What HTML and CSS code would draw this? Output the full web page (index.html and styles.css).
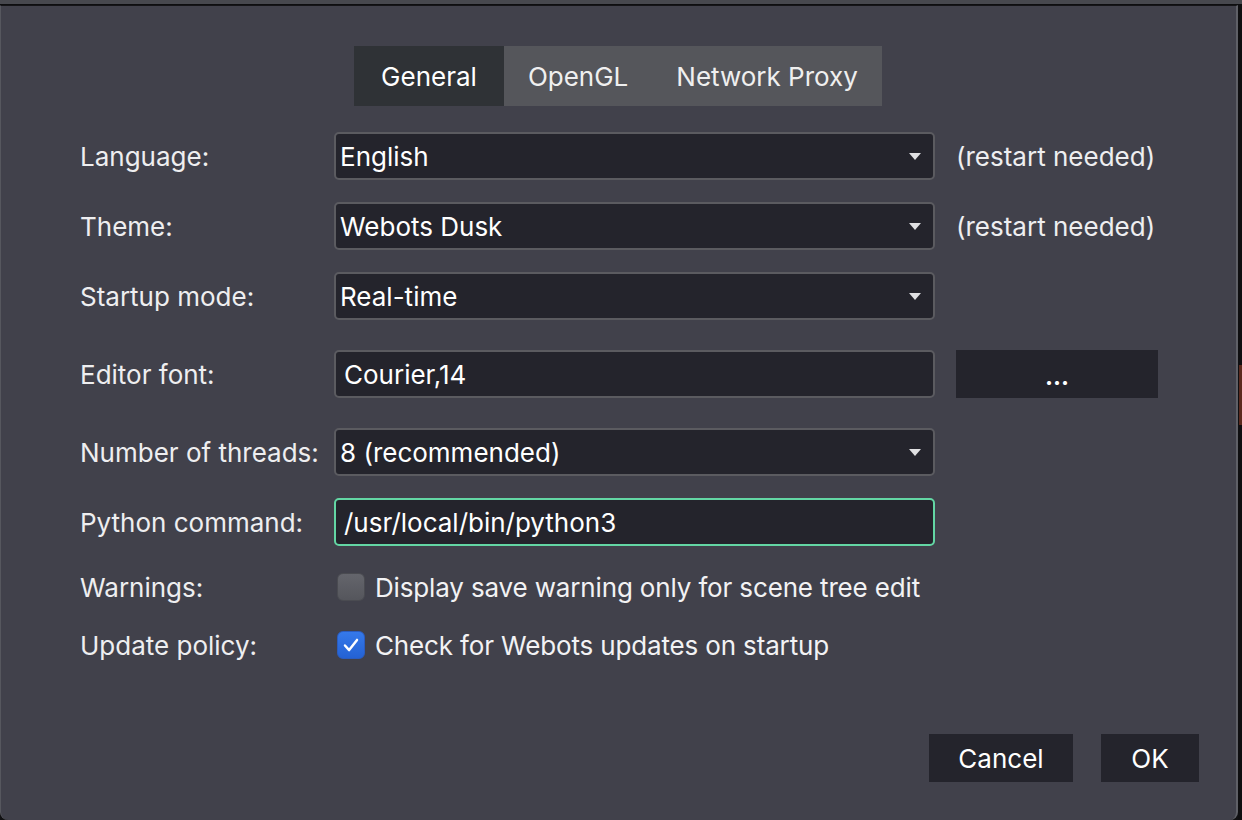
FILE: index.html
```html
<!DOCTYPE html>
<html>
<head>
<meta charset="utf-8">
<link rel="stylesheet" href="styles.css">
</head>
<body>
<div class="screen">
  <div class="topstrip"></div>
  <div class="dialog">
    <div class="tabs">
      <div class="tab active">General</div>
      <div class="tab">OpenGL</div>
      <div class="tab">Network Proxy</div>
    </div>
    <div class="form">
      <div class="row">
        <div class="label">Language:</div>
        <div class="field combo"><span>English</span><span class="arrow"></span></div>
        <div class="note">(restart needed)</div>
      </div>
      <div class="row">
        <div class="label">Theme:</div>
        <div class="field combo"><span>Webots Dusk</span><span class="arrow"></span></div>
        <div class="note">(restart needed)</div>
      </div>
      <div class="row">
        <div class="label">Startup mode:</div>
        <div class="field combo"><span>Real-time</span><span class="arrow"></span></div>
      </div>
      <div class="row wide-gap">
        <div class="label">Editor font:</div>
        <div class="field edit"><span>Courier,14</span></div>
        <div class="dots-btn">...</div>
      </div>
      <div class="row wide-gap">
        <div class="label">Number of threads:</div>
        <div class="field combo"><span>8 (recommended)</span><span class="arrow"></span></div>
      </div>
      <div class="row">
        <div class="label">Python command:</div>
        <div class="field edit focus"><span>/usr/local/bin/python3</span></div>
      </div>
      <div class="row check-row first-check">
        <div class="label">Warnings:</div>
        <div class="check"><span class="box"></span><span>Display save warning only for scene tree edit</span></div>
      </div>
      <div class="row check-row">
        <div class="label">Update policy:</div>
        <div class="check"><span class="box checked"><svg viewBox="0 0 28 28" width="28" height="28"><path d="M7.5 14.5 L12 19.5 L20.5 8.5" fill="none" stroke="#ffffff" stroke-width="2.6" stroke-linecap="round" stroke-linejoin="round"/></svg></span><span>Check for Webots updates on startup</span></div>
      </div>
    </div>
    <div class="buttons">
      <div class="btn cancel">Cancel</div>
      <div class="btn ok">OK</div>
    </div>
  </div>
  <div class="edge"><div class="edge-red"></div></div>
</div>
</body>
</html>
```

FILE: styles.css
```css
* { box-sizing: border-box; }
html, body {
  margin: 0;
  padding: 0;
  width: 1242px;
  height: 820px;
  overflow: hidden;
  background: #111113;
  font-family: Inter, "Noto Sans", "Liberation Sans", sans-serif;
  color: #ececee;
}
.screen {
  position: relative;
  width: 1242px;
  height: 820px;
  display: grid;
  grid-template-columns: 1238px 4px;
  grid-template-rows: 5px 815px;
}
.topstrip {
  grid-column: 1 / 3;
  background: #47484e;
  border-bottom: 1px solid #0e0e10;
}
.dialog {
  grid-column: 1;
  grid-row: 2;
  background: #41414b;
  border-left: 1px solid #56575e;
  border-right: 2px solid #5f6067;
  border-top: 1px solid #151518;
  border-radius: 0 0 8px 8px;
  padding-top: 40px;
  display: flex;
  flex-direction: column;
}
.edge {
  grid-column: 2;
  grid-row: 2;
  background: #0f0f11;
  padding-top: 360px;
}
.edge-red {
  margin-left: 1px;
  height: 60px;
  background: #5a2a1e;
}
.tabs {
  display: flex;
  justify-content: center;
  margin-left: -1px;
}
.tab {
  height: 60px;
  line-height: 62px;
  padding: 0 24px;
  font-size: 26px;
  background: #55565b;
  color: #efefef;
}
.tab.active {
  background: #2f3236;
  padding: 0 27px;
  color: #ffffff;
}
.form {
  margin-top: 26px;
  padding-left: 79px;
  display: flex;
  flex-direction: column;
}
.row {
  display: flex;
  align-items: center;
  height: 48px;
  margin-bottom: 22px;
}
.row.wide-gap { margin-top: 8px; }
.label {
  width: 254px;
  font-size: 26px;
  color: #eeeef0;
}
.field {
  width: 601px;
  height: 48px;
  background: #24242c;
  border: 2px solid #5b5b60;
  border-radius: 5px;
  display: flex;
  align-items: center;
  justify-content: space-between;
  padding: 0 12px 0 4px;
  font-size: 26px;
  color: #ffffff;
}
.field.edit { padding-left: 8px; }
.field.focus { border-color: #63d6a4; }
.arrow {
  width: 0;
  height: 0;
  border-left: 6px solid transparent;
  border-right: 6px solid transparent;
  border-top: 7px solid #e0e0e2;
}
.note {
  margin-left: 21px;
  font-size: 26px;
  color: #eeeef0;
}
.dots-btn {
  margin-left: 21px;
  width: 202px;
  height: 48px;
  background: #24242c;
  text-align: center;
  font-size: 24px;
  line-height: 54px;
  color: #ffffff;
  font-weight: 700;
}
.check-row { height: 48px; }
.first-check { margin-top: -5px; margin-bottom: 10px; }
.check {
  display: flex;
  align-items: center;
  font-size: 26px;
  letter-spacing: -0.15px;
  color: #f2f2f4;
  padding-left: 3px;
}
.box {
  width: 28px;
  height: 28px;
  border-radius: 6px;
  background: linear-gradient(#64656c, #55565c);
  border: 1px solid #4a4b51;
  margin-right: 10px;
  display: flex;
  align-items: center;
  justify-content: center;
}
.box.checked {
  background: linear-gradient(#3579ea, #2462d4);
  border-color: #2a5cc0;
}
.box svg { display: block; }
.buttons {
  margin-top: auto;
  margin-bottom: 38px;
  display: flex;
  justify-content: flex-end;
  padding-right: 37px;
  gap: 28px;
}
.btn {
  height: 48px;
  line-height: 50px;
  background: #24242c;
  text-align: center;
  font-size: 26px;
  color: #ffffff;
}
.btn.cancel { width: 144px; }
.btn.ok { width: 98px; }
```
